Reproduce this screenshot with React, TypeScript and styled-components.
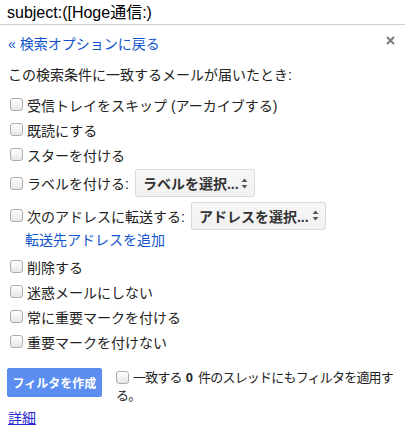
import React from "react";
import styled, { createGlobalStyle } from "styled-components";

const FONT = `"Liberation Sans", Arial, "Noto Sans CJK JP", sans-serif`;

const Global = createGlobalStyle`
  html, body { margin: 0; padding: 0; background: #fff; }
  body { font-family: ${FONT}; color: #222; }
  * { box-sizing: border-box; }
`;

const Page = styled.div`
  width: 405px;
  height: 432px;
  overflow: hidden;
  background: #fff;
`;

const SearchBar = styled.div`
  height: 25px;
  border-bottom: 1px solid #cfcfcf;
  padding-left: 7px;
  font-size: 16px;
  line-height: 25px;
  color: #000;
`;

const Panel = styled.div`
  padding: 10px 10px 0 8px;
  display: flex;
  flex-direction: column;
`;

const TopRow = styled.div`
  display: flex;
  justify-content: space-between;
  align-items: flex-start;
  height: 18px;
`;

const Link = styled.a<{ $underline?: boolean; $color?: string }>`
  color: ${(p) => p.$color || "#15c"};
  text-decoration: ${(p) => (p.$underline ? "underline" : "none")};
  font-size: 14px;
  line-height: 18px;
  cursor: pointer;
`;

const Close = styled.button`
  border: 0;
  background: none;
  padding: 0;
  margin: 1px 0 0 0;
  width: 9px;
  height: 9px;
  display: flex;
  cursor: pointer;
`;

const Heading = styled.div`
  font-size: 14px;
  line-height: 18px;
  margin: 13px 0 8px;
`;

const Row = styled.label<{ $h?: number }>`
  display: flex;
  align-items: center;
  height: ${(p) => p.$h || 25}px;
  font-size: 14px;
  white-space: nowrap;
`;

const Check = styled.input.attrs({ type: "checkbox" })`
  appearance: none;
  -webkit-appearance: none;
  width: 13px;
  height: 13px;
  margin: 0 4px 0 2px;
  border: 1px solid #adadad;
  border-radius: 3px;
  background: linear-gradient(#ffffff, #e6e6e6);
  flex: none;
  vertical-align: middle;
`;

const Dropdown = styled.div<{ $w: number }>`
  display: flex;
  align-items: center;
  justify-content: space-between;
  width: ${(p) => p.$w}px;
  height: 28px;
  margin-left: 6px;
  padding: 0 6px 0 7px;
  border: 1px solid #dadada;
  border-radius: 2px;
  background: linear-gradient(#f7f7f7, #f1f1f1);
  font-size: 14px;
  font-weight: bold;
  color: #333;
`;

const SubLink = styled.div`
  height: 16px;
  line-height: 16px;
  margin-bottom: 6px;
  padding-left: 17px;
  display: flex;
  align-items: center;
`;

const Footer = styled.div`
  display: flex;
  align-items: flex-start;
  gap: 14px;
  margin-top: 14px;
  margin-left: -1px;
`;

const CreateButton = styled.button`
  flex: none;
  width: 95px;
  height: 29px;
  border: 1px solid #5a8df0;
  border-radius: 2px;
  background: #5b8ef0;
  color: #fff;
  font-family: ${FONT};
  font-size: 12px;
  font-weight: bold;
  padding: 0;
  cursor: pointer;
`;

const ApplyText = styled.div`
  width: 280px;
  margin-top: 1px;
  font-size: 13px;
  line-height: 18px;
  letter-spacing: -0.8px;
  color: #222;

  input {
    display: inline-block;
    margin: 0 4px 0 0;
    vertical-align: -2px;
  }
  b {
    letter-spacing: 0;
    margin: 0 5px 0 4px;
  }
`;

const Details = styled.div`
  margin-top: 4px;
  line-height: 16px;
`;

const Arrows = () => (
  <svg width="7" height="11" viewBox="0 0 7 11">
    <path d="M3.5 0.5 L6.5 4 L0.5 4 Z" fill="#555" />
    <path d="M3.5 10.5 L6.5 7 L0.5 7 Z" fill="#555" />
  </svg>
);

export default function App() {
  const options = ["削除する", "迷惑メールにしない", "常に重要マークを付ける", "重要マークを付けない"];
  return (
    <Page>
      <Global />
      <SearchBar>subject:([Hoge通信:)</SearchBar>
      <Panel>
        <TopRow>
          <Link>« 検索オプションに戻る</Link>
          <Close aria-label="閉じる">
            <svg width="9" height="9" viewBox="0 0 9 9">
              <path d="M1 1 L8 8 M8 1 L1 8" stroke="#7a7a7a" strokeWidth="2" />
            </svg>
          </Close>
        </TopRow>
        <Heading>この検索条件に一致するメールが届いたとき:</Heading>
        <Row>
          <Check />
          受信トレイをスキップ (アーカイブする)
        </Row>
        <Row>
          <Check />
          既読にする
        </Row>
        <Row>
          <Check />
          スターを付ける
        </Row>
        <Row $h={32}>
          <Check />
          ラベルを付ける:
          <Dropdown $w={120}>
            <span>ラベルを選択...</span>
            <Arrows />
          </Dropdown>
        </Row>
        <Row $h={33}>
          <Check />
          次のアドレスに転送する:
          <Dropdown $w={135}>
            <span>アドレスを選択...</span>
            <Arrows />
          </Dropdown>
        </Row>
        <SubLink>
          <Link>転送先アドレスを追加</Link>
        </SubLink>
        {options.map((o) => (
          <Row key={o}>
            <Check />
            {o}
          </Row>
        ))}
        <Footer>
          <CreateButton>フィルタを作成</CreateButton>
          <ApplyText>
            <Check />
            一致する<b>0</b>件のスレッドにもフィルタを適用する。
          </ApplyText>
        </Footer>
        <Details>
          <Link $underline $color="#2b2bd4">詳細</Link>
        </Details>
      </Panel>
    </Page>
  );
}
